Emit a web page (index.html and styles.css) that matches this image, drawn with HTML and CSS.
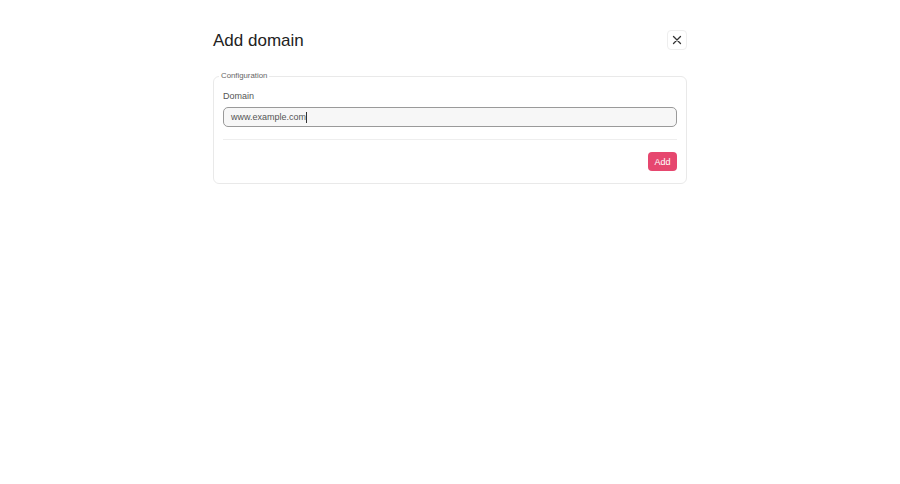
FILE: index.html
```html
<!DOCTYPE html>
<html>
<head>
<meta charset="utf-8">
<link rel="stylesheet" href="styles.css">
</head>
<body>
<div class="dialog">
  <div class="header">
    <h1 class="title">Add domain</h1>
    <button class="close" aria-label="Close">
      <svg width="10" height="10" viewBox="0 0 10 10"><path d="M1.5 1.5 L8.5 8.5 M8.5 1.5 L1.5 8.5" stroke="#333" stroke-width="1.3" stroke-linecap="round"/></svg>
    </button>
  </div>
  <fieldset class="panel">
    <legend class="legend">Configuration</legend>
    <div class="label">Domain</div>
    <div class="input"><span class="value">www.example.com</span><span class="caret"></span></div>
    <div class="sep"></div>
    <div class="actions"><button class="add">Add</button></div>
  </fieldset>
</div>
</body>
</html>
```
FILE: styles.css
```css
html, body {
  margin: 0;
  padding: 0;
  background: #fff;
  font-family: "Liberation Sans", Arial, sans-serif;
}
.dialog {
  width: 474px;
  margin: 0 auto;
  padding-top: 30px;
}
.header {
  display: flex;
  align-items: center;
  justify-content: space-between;
  height: 20px;
}
.title {
  margin: 0;
  padding-top: 2px;
  font-size: 17px;
  font-weight: 400;
  color: #222;
  line-height: 20px;
}
.close {
  width: 20px;
  height: 20px;
  padding: 0;
  border: 1px solid #eeeeee;
  border-radius: 4px;
  background: #fff;
  display: flex;
  align-items: center;
  justify-content: center;
}
.panel {
  margin: 21px 0 0 0;
  padding: 0 9px 12px 9px;
  border: 1px solid #e9e9e9;
  border-radius: 6px;
}
.legend {
  font-size: 7.8px;
  line-height: 10px;
  color: #666;
  padding: 0 2px;
  margin-left: -4px;
}
.label {
  margin-top: 10px;
  font-size: 9px;
  line-height: 11px;
  color: #555;
}
.input {
  margin-top: 5px;
  height: 20px;
  box-sizing: border-box;
  border: 1.5px solid #9a9a9a;
  border-radius: 5px;
  background: #f7f7f7;
  display: flex;
  align-items: center;
  padding-left: 7px;
  font-size: 9px;
  color: #555;
}
.caret {
  display: inline-block;
  width: 1px;
  height: 11px;
  background: #333;
}
.sep {
  margin-top: 12px;
  height: 1px;
  background: #eeeeee;
}
.actions {
  display: flex;
  justify-content: flex-end;
  margin-top: 12px;
}
.add {
  height: 19px;
  width: 29px;
  padding: 0;
  border: none;
  border-radius: 4px;
  background: #e6476f;
  color: #fff;
  font-family: "Liberation Sans", Arial, sans-serif;
  font-size: 9px;
}
```
